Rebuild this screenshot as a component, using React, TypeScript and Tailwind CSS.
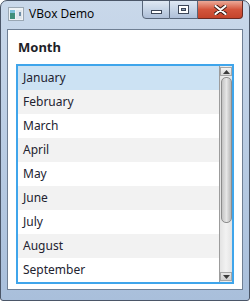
import React from "react";

const months = ["January","February","March","April","May","June","July","August","September"];

function WinIcon() {
  return (
    <svg width="16" height="14" viewBox="0 0 16 14">
      <rect x="0.5" y="0.5" width="15" height="13" fill="#eef2f5" stroke="#9aa7b3" />
      <rect x="2" y="3" width="5" height="9" fill="#3f8f7a" />
      <rect x="2" y="3" width="5" height="3" fill="#7cc0d8" />
      <rect x="8" y="3" width="6" height="9" fill="#dfe6ec" />
      <rect x="11" y="5" width="2" height="4" fill="#6f8fa8" />
    </svg>
  );
}

export default function App() {
  return (
    <div className="w-[250px] h-[301px] bg-white" style={{ fontFamily: '"Noto Sans", sans-serif' }}>
      <div className="w-[250px] h-[301px] flex flex-col border border-[#4b5668] rounded-t-[7px] rounded-b-[3px] bg-gradient-to-b from-[#c9d8ea] via-[#b9cce3] to-[#a9bfdb] overflow-hidden">
        {/* title bar */}
        <div className="h-[28px] flex items-start relative">
          <div className="pl-[7px] pt-[6px] flex items-center gap-[5px]">
            <WinIcon />
            <span className="text-[12px] leading-[14px] text-black" style={{ fontFamily: '"Open Sans", "Noto Sans", sans-serif' }}>VBox Demo</span>
          </div>
          <div className="ml-auto mr-[6px] flex h-[19px] -mt-px">
            <div className="w-[28px] h-[19px] border border-[#58667a] rounded-bl-[4px] bg-gradient-to-b from-[#dfe8f3] via-[#c6d4e6] to-[#aebfd8] flex items-center justify-center">
              <div className="w-[11px] h-[4px] bg-white border border-[#3c4658] mt-[4px]" />
            </div>
            <div className="w-[28px] h-[19px] border-y border-r border-[#58667a] bg-gradient-to-b from-[#dfe8f3] via-[#c6d4e6] to-[#aebfd8] flex items-center justify-center">
              <div className="w-[11px] h-[9px] border border-[#3c4658] bg-white flex items-center justify-center">
                <div className="w-[5px] h-[3px] bg-[#8ea0b8] border border-[#3c4658]" />
              </div>
            </div>
            <div className="w-[45px] h-[19px] border-y border-r border-[#6b2a22] rounded-br-[4px] bg-gradient-to-b from-[#eba998] via-[#d3553c] to-[#c4442b] flex items-center justify-center">
              <svg width="13" height="10" viewBox="0 0 13 10">
                <path d="M1.5 1 L11.5 9 M11.5 1 L1.5 9" stroke="#3a1a14" strokeWidth="4" strokeLinecap="round" />
                <path d="M1.5 1 L11.5 9 M11.5 1 L1.5 9" stroke="#ffffff" strokeWidth="2.2" strokeLinecap="round" />
              </svg>
            </div>
          </div>
        </div>
        {/* client */}
        <div className="mx-[6px] h-[261px] border border-[#6f7f94] bg-white flex flex-col">
          <div className="pl-[10px] pt-[9px] h-[34px] text-[13px] font-bold text-[#1e1e28] leading-[17px]">Month</div>
          <div className="ml-[8px] w-[218px] h-[220px] border-2 border-[#3fa5eb] flex">
            <div className="flex-1 flex flex-col">
              {months.map((m, i) => (
                <div
                  key={m}
                  className={
                    "h-[24px] pl-[5px] flex items-center text-[12px] text-[#222230] " +
                    (i === 0 ? "bg-[#cce2f3]" : i % 2 === 1 ? "bg-[#f2f2f2]" : "bg-white")
                  }
                >
                  {m}
                </div>
              ))}
            </div>
            <div className="w-[13px] h-[216px] border-l border-[#9c9c9c] bg-gradient-to-r from-[#e3e3e3] via-[#f2f2f2] to-[#e3e3e3] flex flex-col items-center">
              <div className="w-[12px] h-[9px] mt-px flex items-center justify-center bg-gradient-to-b from-[#f4f4f4] to-[#d6d6d6] border border-[#a6a6a6]">
                <svg width="7" height="4" viewBox="0 0 7 4"><path d="M0 4 L3.5 0 L7 4 Z" fill="#3a3a3a" /></svg>
              </div>
              <div className="w-[11px] h-[146px] mt-px rounded-[5px] border border-[#8c8c8c] bg-gradient-to-r from-[#c4c4c4] via-[#e6e6e6] to-[#b6b6b6]" />
              <div className="flex-1" />
              <div className="w-[12px] h-[9px] mb-px flex items-center justify-center bg-gradient-to-b from-[#e6e6e6] to-[#cfcfcf] border border-[#a6a6a6]">
                <svg width="7" height="4" viewBox="0 0 7 4"><path d="M0 0 L7 0 L3.5 4 Z" fill="#3a3a3a" /></svg>
              </div>
            </div>
          </div>
        </div>
      </div>
    </div>
  );
}
